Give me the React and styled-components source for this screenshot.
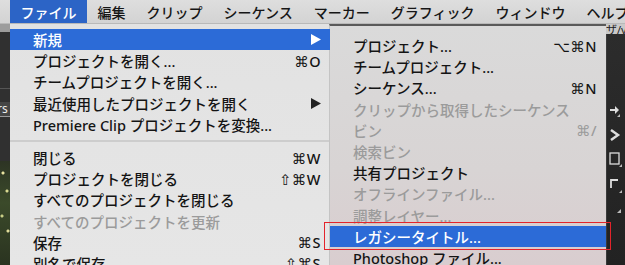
import React from "react";
import styled, { createGlobalStyle } from "styled-components";

const GlobalStyle = createGlobalStyle`
   html, body {
      margin: 0;
      padding: 0;
      background: #2a2a2a;
   }
   body {
      font-family: "Noto Sans", "DejaVu Sans", "Noto Sans CJK JP", sans-serif;
   }
`

const Screen = styled.div`
   width: 625px;
   height: 265px;
   overflow: hidden;
   display: flex;
   flex-direction: column;
   background: #2a2a2a;
`
const MenuBar = styled.div`
   height: 24px;
   flex-shrink: 0;
   display: flex;
   align-items: stretch;
   padding-left: 10px;
   background: linear-gradient(#dedede, #d3d3d3);
   border-bottom: 1px solid #b9b9b9;
   box-sizing: border-box;
`
const MenuTitle = styled.div`
   display: flex;
   align-items: center;
   padding: 0 10.5px;
   font-size: 14px;
   font-weight: 500;
   white-space: nowrap;
   color: ${props => props.$active ? '#fff' : '#161616'};
   background: ${props => props.$active ? '#2c64c6' : 'transparent'};
`
const Workspace = styled.div`
   flex: 1;
   min-height: 0;
   display: flex;
   align-items: flex-start;
`
const LeftStrip = styled.div`
   width: 10px;
   height: 100%;
   flex-shrink: 0;
   display: flex;
   flex-direction: column;
   background: #2e2e2e;
`
const PanelHeader = styled.div`
   height: 8px;
   flex-shrink: 0;
   background: #9c9c9c;
`
const PanelGap = styled.div`
   height: ${props => props.$h}px;
   flex-shrink: 0;
   background: #303030;
   border-bottom: ${props => props.$line ? '1px solid #555' : 'none'};
`
const TabLabel = styled.div`
   height: 14px;
   flex-shrink: 0;
   background: #454545;
   color: #eee;
   font-size: 12px;
   line-height: 14px;
   text-indent: -3px;
   overflow: hidden;
   border-bottom: 1px solid #9a9a9a;
`
const Footage = styled.div`
   flex: 1;
   background:
      radial-gradient(circle at 3px 12px, #e8e2a0 0 1px, transparent 2px),
      radial-gradient(circle at 7px 30px, #d8d890 0 1px, transparent 2px),
      radial-gradient(circle at 2px 55px, #c9cf86 0 1px, transparent 2px),
      radial-gradient(circle at 8px 70px, #e0dc9a 0 1px, transparent 2px),
      linear-gradient(#2d3424, #3b4a2a 40%, #2a3320);
`
const Dropdown = styled.div`
   width: 320px;
   height: 100%;
   flex-shrink: 0;
   box-sizing: border-box;
   padding-top: 5px;
   background: linear-gradient(#e2e2e2, #e6e6e6);
`
const Submenu = styled.div`
   width: 277px;
   height: 100%;
   flex-shrink: 0;
   box-sizing: border-box;
   padding-top: 9px;
   border-top: 2px solid #5a5a5a;
   border-left: 1px solid #c4c4c4;
   margin-left: -1px;
   background: linear-gradient(#dadada, #d8d4d4 60%, #d9cdcf);
`
const Item = styled.div`
   position: relative;
   height: 21.2px;
   display: flex;
   align-items: center;
   justify-content: space-between;
   padding: 0 9px 0 23px;
   font-size: 14.5px;
   font-weight: 500;
   white-space: nowrap;
   color: ${props => props.$selected ? '#fff' : props.$disabled ? '#9b9b9b' : '#141414'};
   background: ${props => props.$selected ? '#2c6bd7' : 'transparent'};
   &::after {
      content: "";
      display: ${props => props.$marked ? 'block' : 'none'};
      position: absolute;
      top: -4px;
      bottom: -3px;
      left: -6px;
      right: -5px;
      border: 1.5px solid #e3242b;
      z-index: 2;
   }
`
const Shortcut = styled.span`
   font-size: 14.5px;
   letter-spacing: 0.5px;
`
const Separator = styled.div`
   height: 12px;
   display: flex;
   align-items: center;
   &::before {
      content: "";
      flex: 1;
      height: 2px;
      background: #cdcdcd;
   }
`
const RightStrip = styled.div`
   flex: 1;
   height: 100%;
   display: flex;
   flex-direction: column;
   background: #262626;
`
const RightHeader = styled.div`
   height: 10px;
   flex-shrink: 0;
   background: #c9c9c9;
   color: #222;
   font-size: 11px;
   line-height: 11px;
   white-space: nowrap;
   overflow: hidden;
`
const ToolColumn = styled.div`
   flex: 1;
   display: flex;
   flex-direction: column;
   align-items: flex-start;
   gap: 10px;
   padding: 70px 0 0 2px;
   border-left: 1px solid #3a3a3a;
   background: linear-gradient(#2c2c2c, #222);
`
const ToolIcon = styled.svg`
   display: block;
   flex-shrink: 0;
`

const Arrow = ({ light }) => (
   <svg width="10" height="11" viewBox="0 0 10 11">
      <path d="M0 0 L10 5.5 L0 11 Z" fill={light ? '#fff' : '#222'} />
   </svg>
)

const fileItems = [
   { label: '新規', arrow: true, selected: true },
   { label: 'プロジェクトを開く...', key: '⌘O' },
   { label: 'チームプロジェクトを開く...' },
   { label: '最近使用したプロジェクトを開く', arrow: true },
   { label: 'Premiere Clip プロジェクトを変換...' },
   { sep: true },
   { label: '閉じる', key: '⌘W' },
   { label: 'プロジェクトを閉じる', key: '⇧⌘W' },
   { label: 'すべてのプロジェクトを閉じる' },
   { label: 'すべてのプロジェクトを更新', disabled: true },
   { label: '保存', key: '⌘S' },
   { label: '別名で保存', key: '⇧⌘S' },
]

const newItems = [
   { label: 'プロジェクト...', key: '⌥⌘N' },
   { label: 'チームプロジェクト...' },
   { label: 'シーケンス...', key: '⌘N' },
   { label: 'クリップから取得したシーケンス', disabled: true },
   { label: 'ビン', key: '⌘/', disabled: true },
   { label: '検索ビン', disabled: true },
   { label: '共有プロジェクト' },
   { label: 'オフラインファイル...', disabled: true },
   { label: '調整レイヤー...', disabled: true },
   { label: 'レガシータイトル...', selected: true, marked: true },
   { label: 'Photoshop ファイル...' },
]

const menus = ['ファイル', '編集', 'クリップ', 'シーケンス', 'マーカー', 'グラフィック', 'ウィンドウ', 'ヘルプ']

const renderItems = (items) => items.map((it, i) => it.sep
   ? <Separator key={i} />
   : (
      <Item key={i} $selected={it.selected} $disabled={it.disabled} $marked={it.marked}>
         <span>{it.label}</span>
         {it.key && <Shortcut>{it.key}</Shortcut>}
         {it.arrow && <Arrow light={it.selected} />}
      </Item>
   ))

const App = () => {
   return (
      <Screen>
         <GlobalStyle />
         <MenuBar>
            {menus.map((m, i) => (
               <MenuTitle key={m} $active={i === 0}>{m}</MenuTitle>
            ))}
         </MenuBar>
         <Workspace>
            <LeftStrip>
               <PanelHeader />
               <PanelGap $h={56} $line />
               <PanelGap $h={13} />
               <TabLabel>rs</TabLabel>
               <PanelGap $h={44} />
               <Footage />
            </LeftStrip>
            <Dropdown>
               {renderItems(fileItems)}
            </Dropdown>
            <Submenu>
               {renderItems(newItems)}
            </Submenu>
            <RightStrip>
               <RightHeader>ザ/y</RightHeader>
               <ToolColumn>
                  <ToolIcon width="12" height="14" viewBox="0 0 12 14">
                     <path d="M1 5 L6 5 L6 2 L10 6 L6 10 L6 7 L1 7 Z" fill="#ddd" />
                     <path d="M8 13 L11 13 L11 10 Z" fill="#bbb" />
                  </ToolIcon>
                  <ToolIcon width="12" height="14" viewBox="0 0 12 14">
                     <path d="M2 2 L9 7 L2 12" stroke="#ddd" strokeWidth="2.5" fill="none" />
                  </ToolIcon>
                  <ToolIcon width="14" height="16" viewBox="0 0 14 16">
                     <rect x="1" y="1" width="9" height="11" stroke="#ddd" strokeWidth="1.3" fill="none" />
                     <path d="M10 15 L13 15 L13 12 Z" fill="#bbb" />
                  </ToolIcon>
                  <ToolIcon width="14" height="16" viewBox="0 0 14 16">
                     <path d="M2 10 L2 2 L9 2" stroke="#ddd" strokeWidth="1.8" fill="none" />
                     <path d="M10 15 L13 15 L13 12 Z" fill="#bbb" />
                  </ToolIcon>
                  <ToolIcon width="14" height="10" viewBox="0 0 14 10">
                     <path d="M8 9 L12 9 L12 5 Z" fill="#bbb" />
                  </ToolIcon>
               </ToolColumn>
            </RightStrip>
         </Workspace>
      </Screen>
   )
}
export default App
